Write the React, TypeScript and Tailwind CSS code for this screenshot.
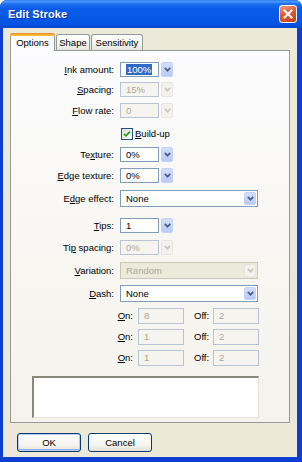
import React from "react";

const FONT = "font-['Liberation_Sans',Arial,sans-serif]";

function Chevron({ disabled }: { disabled?: boolean }) {
  return (
    <svg width="7" height="5" viewBox="0 0 7 5">
      <path
        d="M0.8 0.8 L3.5 3.7 L6.2 0.8"
        fill="none"
        stroke={disabled ? "#c9c7ba" : "#4d6185"}
        strokeWidth="1.7"
      />
    </svg>
  );
}

function DropBtn({ disabled }: { disabled?: boolean }) {
  return (
    <div
      className={
        "w-[12px] h-full flex items-center justify-center rounded-[2px] border " +
        (disabled
          ? "border-[#e8e6dc] bg-[#f3f2ec]"
          : "border-[#c3d2f5] bg-[linear-gradient(180deg,#d2defb,#b7cbf6)]")
      }
    >
      <Chevron disabled={disabled} />
    </div>
  );
}

function Lbl({ pre = "", u, post = "" }: { pre?: string; u: string; post?: string }) {
  return (
    <span>
      {pre}
      <span className="underline underline-offset-[1px]">{u}</span>
      {post}
    </span>
  );
}

function Row({
  label,
  mt,
  h,
  children,
}: {
  label: React.ReactNode;
  mt: string;
  h: string;
  children: React.ReactNode;
}) {
  return (
    <div className={"flex items-center " + mt + " " + h}>
      <div className="w-[103px] text-right leading-none">{label}</div>
      <div className="ml-[6px] flex h-full items-stretch">{children}</div>
    </div>
  );
}

function Combo({ value, disabled, selected }: { value: string; disabled?: boolean; selected?: boolean }) {
  return (
    <div className="flex h-full gap-[2px]">
      <div
        className={
          "w-[39px] h-full border flex items-center pl-[5px] leading-none " +
          (disabled ? "border-[#b8c3d3] bg-[#f5f4ef] text-[#aca899]" : "border-[#7f9db9] bg-white text-black")
        }
      >
        {selected ? <span className="bg-[#316ac5] text-white px-[1px] py-[1px]">{value}</span> : value}
      </div>
      <DropBtn disabled={disabled} />
    </div>
  );
}

function Select({ value, disabled }: { value: string; disabled?: boolean }) {
  return (
    <div
      className={
        "w-[138px] h-full border flex items-stretch p-[1px] " +
        (disabled ? "border-[#c9c7ba] bg-[#ebeadb]" : "border-[#7f9db9] bg-white")
      }
    >
      <div className={"flex-1 flex items-center pl-[4px] leading-none " + (disabled ? "text-[#aca899]" : "text-black")}>
        {value}
      </div>
      <DropBtn disabled={disabled} />
    </div>
  );
}

function OnOffRow({ on, off, mt }: { on: string; off: string; mt: string }) {
  return (
    <div className={"flex items-center h-[16px] " + mt}>
      <div className="w-[122px] text-right leading-none">
        <Lbl u="O" post="n:" />
      </div>
      <div className="ml-[5px] w-[46px] h-full border border-[#b8c3d3] bg-[#f5f4ef] text-[#aca899] flex items-center pl-[5px] leading-none">
        {on}
      </div>
      <div className="ml-[10px] w-[17px] leading-none">Off:</div>
      <div className="ml-[2px] w-[46px] h-full border border-[#b8c3d3] bg-[#f5f4ef] text-[#aca899] flex items-center pl-[5px] leading-none">
        {off}
      </div>
    </div>
  );
}

export default function App() {
  return (
    <div className={"w-[302px] h-[462px] bg-white " + FONT}>
      <div className="w-[302px] h-[462px] flex flex-col rounded-t-[7px] bg-[#0a3fd2] overflow-hidden">
        {/* Title bar */}
        <div className="h-[28px] flex items-center pl-[8px] pr-[5px] bg-[linear-gradient(180deg,#2a7bf5_0%,#4a97ff_6%,#1f70f0_14%,#0a5de8_30%,#0657e6_70%,#0552e0_90%,#0446cc_100%)]">
          <div className="text-white font-bold text-[11px] leading-none [text-shadow:1px_1px_0_#0a2f9a] tracking-[0.1px]">
            Edit Stroke
          </div>
          <div className="ml-auto w-[18px] h-[18px] rounded-[3px] border border-white bg-[linear-gradient(160deg,#f29c7c,#e05b34_45%,#c73e17)] flex items-center justify-center">
            <svg width="10" height="10" viewBox="0 0 10 10">
              <path d="M1.5 1.5 L8.5 8.5 M8.5 1.5 L1.5 8.5" stroke="white" strokeWidth="2" strokeLinecap="square" />
            </svg>
          </div>
        </div>

        {/* Body */}
        <div className="flex-1 ml-[3px] mr-[5px] mb-[5px] bg-[#ece9d8] flex flex-col px-[7px] pt-[5px] text-[9.5px] text-black">
          {/* Tabs */}
          <div className="flex items-end h-[17px] relative z-10">
            <div className="w-[45px] h-[18px] -mb-[1px] rounded-t-[3px] border-x border-[#919b9c] bg-[#fcfcfe] flex flex-col">
              <div className="h-[3px] -mx-[1px] rounded-t-[3px] bg-[linear-gradient(180deg,#e68b2c,#ffc73c)]" />
              <div className="flex-1 flex items-center justify-center leading-none pb-[1px]">Options</div>
            </div>
            <div className="ml-[1px] w-[34px] h-[16px] rounded-t-[3px] border border-b-0 border-[#919b9c] bg-[linear-gradient(180deg,#ffffff,#f3f3ef_60%,#e6e4da)] flex items-center justify-center leading-none">
              Shape
            </div>
            <div className="ml-[1px] w-[52px] h-[16px] rounded-t-[3px] border border-b-0 border-[#919b9c] bg-[linear-gradient(180deg,#ffffff,#f3f3ef_60%,#e6e4da)] flex items-center justify-center leading-none">
              Sensitivity
            </div>
          </div>
          {/* Panel */}
          <div className="h-[373px] border border-[#919b9c] bg-[linear-gradient(180deg,#fcfcfe,#f7f6f1_60%,#f3f2ec)] flex flex-col pt-[11px]">
            <Row label={<Lbl u="I" post="nk amount:" />} mt="" h="h-[15px]">
              <Combo value="100%" selected />
            </Row>
            <Row label={<Lbl u="S" post="pacing:" />} mt="mt-[5px]" h="h-[15px]">
              <Combo value="15%" disabled />
            </Row>
            <Row label={<Lbl u="F" post="low rate:" />} mt="mt-[6px]" h="h-[15px]">
              <Combo value="0" disabled />
            </Row>
            <div className="flex items-center mt-[10px] h-[12px]">
              <div className="ml-[110px] w-[12px] h-[12px] border border-[#1c5180] bg-[linear-gradient(135deg,#dcdcd7,#ffffff)] flex items-center justify-center">
                <svg width="8" height="8" viewBox="0 0 8 8">
                  <path d="M1 3.8 L3 5.8 L7 1.6" fill="none" stroke="#21a121" strokeWidth="1.8" />
                </svg>
              </div>
              <div className="ml-[2px] leading-none">
                <Lbl u="B" post="uild-up" />
              </div>
            </div>
            <Row label={<Lbl pre="Te" u="x" post="ture:" />} mt="mt-[7px]" h="h-[15px]">
              <Combo value="0%" />
            </Row>
            <Row label={<Lbl u="E" post="dge texture:" />} mt="mt-[6px]" h="h-[15px]">
              <Combo value="0%" />
            </Row>
            <Row label={<Lbl pre="E" u="d" post="ge effect:" />} mt="mt-[7px]" h="h-[17px]">
              <Select value="None" />
            </Row>
            <Row label={<Lbl u="T" post="ips:" />} mt="mt-[11px]" h="h-[15px]">
              <Combo value="1" />
            </Row>
            <Row label={<Lbl pre="Ti" u="p" post=" spacing:" />} mt="mt-[7px]" h="h-[15px]">
              <Combo value="0%" disabled />
            </Row>
            <Row label={<Lbl u="V" post="ariation:" />} mt="mt-[7px]" h="h-[17px]">
              <Select value="Random" disabled />
            </Row>
            <Row label={<Lbl u="D" post="ash:" />} mt="mt-[6px]" h="h-[17px]">
              <Select value="None" />
            </Row>
            <OnOffRow on="8" off="2" mt="mt-[6px]" />
            <OnOffRow on="1" off="2" mt="mt-[5px]" />
            <OnOffRow on="1" off="2" mt="mt-[5px]" />
            <div className="mt-[10px] ml-[21px] w-[227px] h-[42px] border-t-2 border-l-2 border-t-[#8a887c] border-l-[#8a887c] border-r border-b border-r-[#e6e4da] border-b-[#e6e4da] bg-white" />
          </div>
          {/* Buttons */}
          <div className="flex mt-[10px] ml-[7px] gap-[7px]">
            <div className="w-[64px] h-[19px] rounded-[3px] border border-[#003c74] bg-[linear-gradient(180deg,#ffffff,#f3f2ed_70%,#e3e1d6)] shadow-[inset_0_0_0_1px_#b8cdf6,inset_0_-1px_0_1px_#8fb0ee] flex items-center justify-center leading-none">
              OK
            </div>
            <div className="w-[64px] h-[19px] rounded-[3px] border border-[#003c74] bg-[linear-gradient(180deg,#ffffff,#f3f2ed_70%,#e3e1d6)] flex items-center justify-center leading-none">
              Cancel
            </div>
          </div>
        </div>
      </div>
    </div>
  );
}
